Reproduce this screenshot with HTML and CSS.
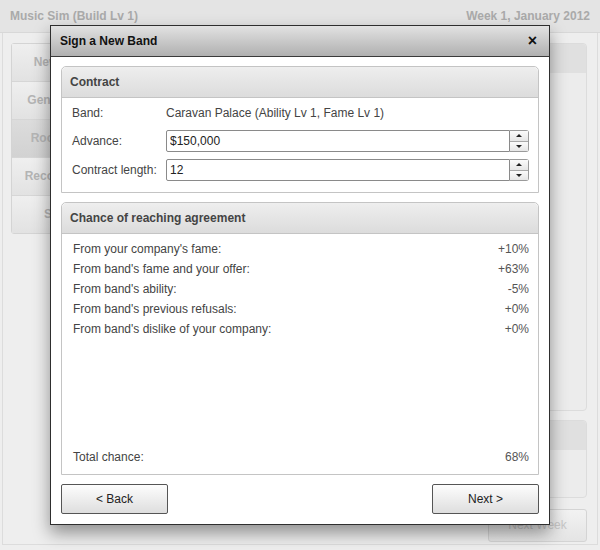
FILE: index.html
```html
<!DOCTYPE html>
<html lang="en">
<head>
  <meta charset="UTF-8">
  <title>Music Sim</title>
  <link rel="stylesheet" href="styles.css">
</head>
<body>
  <div class="topbar">
    <span>Music Sim (Build Lv 1)</span>
    <span>Week 1, January 2012</span>
  </div>
  <div class="main">
    <div class="nav">
      <div class="navbtn">New Bands</div>
      <div class="navbtn">Genre Trends</div>
      <div class="navbtn active">Rock Charts</div>
      <div class="navbtn">Record Labels</div>
      <div class="navbtn">Studios</div>
    </div>
    <div class="content">
      <div class="bgpanel big">
        <div class="bghead"></div>
      </div>
      <div class="bgpanel small">
        <div class="bghead"></div>
      </div>
      <div class="bgfoot">
        <div class="bgbtn">Next Week</div>
      </div>
    </div>
  </div>

  <div class="dialog">
    <div class="dlg-title">
      <span>Sign a New Band</span>
      <span class="close">&times;</span>
    </div>
    <div class="dlg-body">
      <div class="panel">
        <div class="panel-head">Contract</div>
        <div class="contract">
          <div class="lbl">Band:</div>
          <div class="val">Caravan Palace (Ability Lv 1, Fame Lv 1)</div>
          <div class="lbl">Advance:</div>
          <div class="field">
            <input type="text" value="$150,000">
            <div class="spin"><span class="up"></span><span class="down"></span></div>
          </div>
          <div class="lbl">Contract length:</div>
          <div class="field">
            <input type="text" value="12">
            <div class="spin"><span class="up"></span><span class="down"></span></div>
          </div>
        </div>
      </div>

      <div class="panel grow">
        <div class="panel-head">Chance of reaching agreement</div>
        <div class="chance">
          <div class="row"><span>From your company's fame:</span><span>+10%</span></div>
          <div class="row"><span>From band's fame and your offer:</span><span>+63%</span></div>
          <div class="row"><span>From band's ability:</span><span>-5%</span></div>
          <div class="row"><span>From band's previous refusals:</span><span>+0%</span></div>
          <div class="row"><span>From band's dislike of your company:</span><span>+0%</span></div>
          <div class="row total"><span>Total chance:</span><span>68%</span></div>
        </div>
      </div>

      <div class="buttons">
        <button>&lt; Back</button>
        <button>Next &gt;</button>
      </div>
    </div>
  </div>
</body>
</html>
```

FILE: styles.css
```css
body {
  margin: 0;
  width: 600px;
  height: 550px;
  background: #eeeeee;
  font-family: "Liberation Sans", Arial, sans-serif;
  font-size: 12px;
  color: #444;
  overflow: hidden;
}

/* faded background page */
.topbar {
  height: 32px;
  display: flex;
  justify-content: space-between;
  align-items: center;
  padding: 0 10px;
  background: #e4e4e4;
  border-bottom: 1px solid #d8d8d8;
  font-weight: bold;
  color: #aaa;
}
.main {
  display: flex;
  gap: 12px;
  height: 497px;
  margin: 0 2px;
  padding: 10px 10px 4px 8px;
  border: 1px solid #dcdcdc;
  border-top: none;
}
.nav {
  width: 108px;
  align-self: flex-start;
  border: 1px solid #d4d4d4;
  border-radius: 3px;
}
.navbtn {
  height: 37px;
  line-height: 37px;
  text-align: center;
  font-weight: bold;
  color: #b4b4b4;
  background: linear-gradient(#efefef, #e2e2e2);
  border-bottom: 1px solid #d6d6d6;
}
.navbtn:last-child {
  border-bottom: none;
}
.navbtn.active {
  background: linear-gradient(#dcdcdc, #d2d2d2);
}
.content {
  flex: 1;
  display: flex;
  flex-direction: column;
}
.content > div {
  flex-shrink: 0;
}
.bgpanel {
  box-sizing: border-box;
  border: 1px solid #dcdcdc;
  border-radius: 4px;
  background: #ececec;
}
.bgpanel.big {
  height: 368px;
}
.bgpanel.small {
  height: 78px;
  margin-top: 9px;
}
.bghead {
  height: 29px;
  background: #e0e0e0;
  border-radius: 4px 4px 0 0;
}
.bgfoot {
  display: flex;
  justify-content: flex-end;
  margin-top: 11px;
}
.bgbtn {
  width: 97px;
  height: 31px;
  line-height: 31px;
  text-align: center;
  color: #c8c8c8;
  border: 1px solid #d4d4d4;
  border-radius: 3px;
  background: linear-gradient(#f2f2f2, #e4e4e4);
}

/* dialog */
.dialog {
  position: absolute;
  left: 50px;
  top: 25px;
  width: 500px;
  height: 500px;
  box-sizing: border-box;
  border: 1px solid #2e2e2e;
  background: #fff;
  display: flex;
  flex-direction: column;
  box-shadow: 0 8px 16px rgba(0, 0, 0, 0.4);
}
.dlg-title {
  height: 30px;
  display: flex;
  justify-content: space-between;
  align-items: center;
  padding: 0 12px 0 9px;
  background: linear-gradient(#e2e2e2, #b0b0b0);
  border-bottom: 1px solid #3a3a3a;
  font-weight: bold;
  color: #111;
}
.close {
  font-size: 16px;
  line-height: 1;
}
.dlg-body {
  flex: 1;
  display: flex;
  flex-direction: column;
  gap: 9px;
  padding: 9px 10px 10px;
}
.panel {
  border: 1px solid #c4c4c4;
  border-radius: 5px 5px 0 0;
  display: flex;
  flex-direction: column;
}
.panel.grow {
  flex: 1;
}
.panel-head {
  height: 30px;
  line-height: 30px;
  padding: 0 8px;
  font-weight: bold;
  color: #444;
  background: linear-gradient(#eeeeee, #dcdcdc);
  border-bottom: 1px solid #c4c4c4;
  border-radius: 5px 5px 0 0;
}
.contract {
  display: grid;
  grid-template-columns: 94px 1fr;
  grid-template-rows: 20px 22px 22px;
  row-gap: 7px;
  align-items: center;
  padding: 5px 9px 11px 10px;
}
.val {
  color: #444;
}
.field {
  display: flex;
  height: 22px;
}
.field input {
  flex: 1;
  min-width: 0;
  margin: 0;
  padding: 0 3px;
  border: 1px solid #8a8a8a;
  border-radius: 2px 0 0 2px;
  font-family: inherit;
  font-size: 12px;
  color: #222;
  outline: none;
}
.spin {
  width: 18px;
  display: flex;
  flex-direction: column;
  border: 1px solid #9a9a9a;
  border-left: none;
  border-radius: 0 3px 3px 0;
}
.spin span {
  flex: 1;
  position: relative;
  background: linear-gradient(#fbfbfb, #e6e6e6);
}
.spin .up {
  border-bottom: 1px solid #a8a8a8;
}
.spin span::after {
  content: "";
  position: absolute;
  left: 6px;
  top: 3px;
  border-left: 3px solid transparent;
  border-right: 3px solid transparent;
}
.spin .up::after {
  border-bottom: 3px solid #222;
}
.spin .down::after {
  border-top: 3px solid #222;
}
.chance {
  flex: 1;
  display: flex;
  flex-direction: column;
  padding: 5px 9px 7px 11px;
}
.row {
  display: flex;
  justify-content: space-between;
  height: 20px;
  line-height: 20px;
}
.row span:last-child {
  color: #555;
}
.row.total {
  margin-top: auto;
}
.buttons {
  display: flex;
  justify-content: space-between;
}
.buttons button {
  width: 107px;
  height: 30px;
  border: 1px solid #555;
  border-radius: 2px;
  background: linear-gradient(#fdfdfd, #dedede);
  font-family: inherit;
  font-size: 12px;
  color: #222;
}
```
